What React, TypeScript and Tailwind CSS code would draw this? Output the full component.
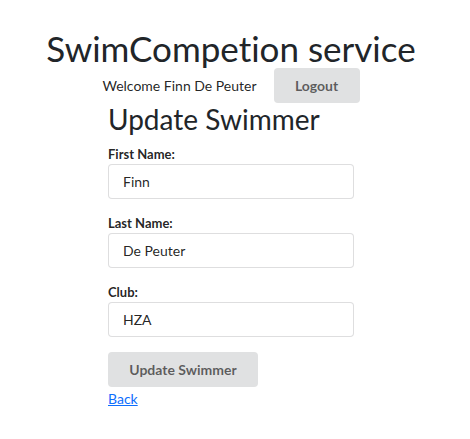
import { useState } from 'react'

const font = { fontFamily: 'Lato, "Noto Sans", sans-serif', fontVariantLigatures: 'none' as const }

function Field({ label, value, onChange }: { label: string; value: string; onChange: (v: string) => void }) {
  return (
    <div className="mb-[14px] flex flex-col">
      <label className="mb-[1px] mt-[1px] text-[13px] font-bold leading-[18px] text-black/[.87]">{label}</label>
      <input
        value={value}
        onChange={(e) => onChange(e.target.value)}
        className="h-[35px] w-full rounded-[4px] border border-[#22242626] bg-white px-[14px] text-[14px] text-black/[.87] outline-none"
      />
    </div>
  )
}

export default function App() {
  const [first, setFirst] = useState('Finn')
  const [last, setLast] = useState('De Peuter')
  const [club, setClub] = useState('HZA')

  return (
    <div style={font} className="flex min-h-[439px] w-[462px] flex-col items-center bg-white text-[#212529]">
      <h1 className="pt-[28px] text-[35px] font-normal leading-[40px]">SwimCompetion service</h1>
      <div className="flex h-[35px] items-center gap-[17px]">
        <span className="text-[14px] text-black/[.87]">Welcome Finn De Peuter</span>
        <button className="h-[35px] w-[86px] rounded-[4px] bg-[#e0e1e2] text-[14px] font-bold text-black/60">Logout</button>
      </div>
      <form className="flex w-[246px] flex-col" onSubmit={(e) => e.preventDefault()}>
        <h2 className="mb-[9px] text-[28px] font-normal leading-[32px]">Update Swimmer</h2>
        <Field label="First Name:" value={first} onChange={setFirst} />
        <Field label="Last Name:" value={last} onChange={setLast} />
        <Field label="Club:" value={club} onChange={setClub} />
        <button
          type="submit"
          className="mt-px h-[35px] w-[150px] rounded-[4px] bg-[#e0e1e2] text-[14px] font-bold text-black/60"
        >
          Update Swimmer
        </button>
        <a href="#" className="mt-[2px] self-start text-[14px] leading-[20px] text-[#0d6efd] underline">
          Back
        </a>
      </form>
    </div>
  )
}
